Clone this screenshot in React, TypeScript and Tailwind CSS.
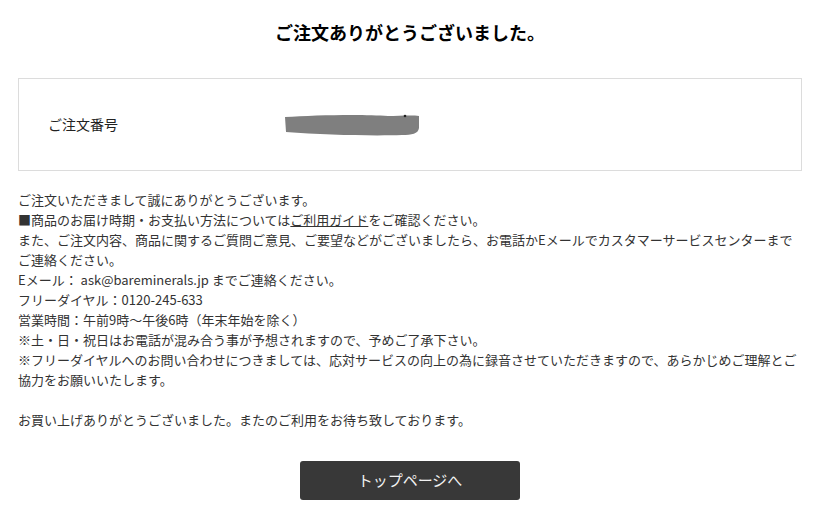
export default function App() {
  const font = { fontFamily: '"Noto Sans CJK JP", "Noto Sans", sans-serif' };

  return (
    <div className="min-h-[520px] w-[830px] bg-white text-[#333]" style={font}>
      <div className="ml-[18px] w-[784px] pt-[20px]">
        <h1 className="text-center text-[18px] leading-[24px] font-bold text-black">
          ご注文ありがとうございました。
        </h1>

        <div className="mt-[34px] flex h-[93px] items-center border border-[#dcdcdc]">
          <div className="w-[265px] pl-[29px] text-[14px] text-[#222]">ご注文番号</div>
          {/* order number is redacted in the source */}
          <svg width="140" height="24" viewBox="0 0 140 24" className="mt-[2px]">
            <path
              d="M1 3 C30 1 80 0 104 2 C114 2 128 1 135 2 L135 14 C134 20 128 21 118 21 C90 22 40 21 2 18 Z"
              fill="#7f7f7f"
            />
            <circle cx="121" cy="2" r="1.3" fill="#222" />
          </svg>
        </div>

        <div className="mt-[19px] text-[13px] leading-[20px] whitespace-nowrap">
          <p>ご注文いただきまして誠にありがとうございます。</p>
          <p>
            ■商品のお届け時期・お支払い方法については
            <a href="#" className="underline text-[#333]">ご利用ガイド</a>
            をご確認ください。
          </p>
          <p>また、ご注文内容、商品に関するご質問ご意見、ご要望などがございましたら、お電話かEメールでカスタマーサービスセンターまで</p>
          <p>ご連絡ください。</p>
          <p>Eメール： ask@bareminerals.jp までご連絡ください。</p>
          <p>フリーダイヤル：0120-245-633</p>
          <p>営業時間：午前9時～午後6時（年末年始を除く）</p>
          <p>※土・日・祝日はお電話が混み合う事が予想されますので、予めご了承下さい。</p>
          <p>※フリーダイヤルへのお問い合わせにつきましては、応対サービスの向上の為に録音させていただきますので、あらかじめご理解とご</p>
          <p>協力をお願いいたします。</p>
          <p className="h-[20px]"></p>
          <p>お買い上げありがとうございました。またのご利用をお待ち致しております。</p>
        </div>

        <div className="mt-[31px] flex justify-center">
          <button className="h-[39px] w-[220px] rounded-[3px] bg-[#383838] text-[15px] text-[#f2f2f2]">
            トップページへ
          </button>
        </div>
      </div>
    </div>
  );
}
